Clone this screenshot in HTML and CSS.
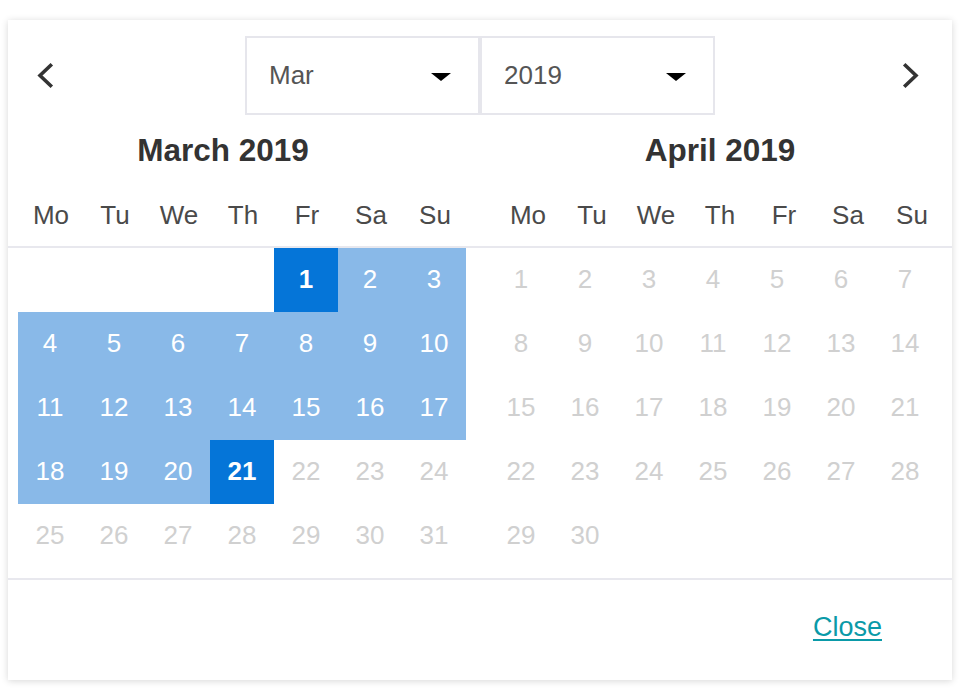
FILE: index.html
```html
<!DOCTYPE html>
<html lang="en">
<head>
<meta charset="utf-8">
<title>Date range picker</title>
<link rel="stylesheet" href="styles.css">
</head>
<body>
<div class="picker">
  <div class="nav">
    <button class="nav-btn nav-prev" aria-label="Previous month">
      <svg width="20" height="30" viewBox="0 0 20 30"><path d="M14.5 4.5 L4 14.5 L14.5 24.5" fill="none" stroke="#333" stroke-width="3.6" stroke-linecap="square" stroke-linejoin="miter"/></svg>
    </button>
    <div class="selects">
      <div class="select"><span>Mar</span><span class="caret"></span></div>
      <div class="select"><span>2019</span><span class="caret"></span></div>
    </div>
    <button class="nav-btn nav-next" aria-label="Next month">
      <svg width="20" height="30" viewBox="0 0 20 30"><path d="M4.5 4.5 L15 14.5 L4.5 24.5" fill="none" stroke="#333" stroke-width="3.6" stroke-linecap="square" stroke-linejoin="miter"/></svg>
    </button>
  </div>

  <div class="months-head">
    <div class="month-head first">
      <div class="month-title title-mar">March 2019</div>
      <div class="weekdays"><span>Mo</span><span>Tu</span><span>We</span><span>Th</span><span>Fr</span><span>Sa</span><span>Su</span></div>
    </div>
    <div class="month-head second">
      <div class="month-title title-apr">April 2019</div>
      <div class="weekdays"><span>Mo</span><span>Tu</span><span>We</span><span>Th</span><span>Fr</span><span>Sa</span><span>Su</span></div>
    </div>
  </div>

  <div class="months-body">
    <div class="days first">
      <span class="day edge start-fri">1</span>
      <span class="day range">2</span>
      <span class="day range">3</span>
      <span class="day range">4</span>
      <span class="day range">5</span>
      <span class="day range">6</span>
      <span class="day range">7</span>
      <span class="day range">8</span>
      <span class="day range">9</span>
      <span class="day range">10</span>
      <span class="day range">11</span>
      <span class="day range">12</span>
      <span class="day range">13</span>
      <span class="day range">14</span>
      <span class="day range">15</span>
      <span class="day range">16</span>
      <span class="day range">17</span>
      <span class="day range">18</span>
      <span class="day range">19</span>
      <span class="day range">20</span>
      <span class="day edge">21</span>
      <span class="day off">22</span>
      <span class="day off">23</span>
      <span class="day off">24</span>
      <span class="day off">25</span>
      <span class="day off">26</span>
      <span class="day off">27</span>
      <span class="day off">28</span>
      <span class="day off">29</span>
      <span class="day off">30</span>
      <span class="day off">31</span>
    </div>
    <div class="days second">
      <span class="day off">1</span>
      <span class="day off">2</span>
      <span class="day off">3</span>
      <span class="day off">4</span>
      <span class="day off">5</span>
      <span class="day off">6</span>
      <span class="day off">7</span>
      <span class="day off">8</span>
      <span class="day off">9</span>
      <span class="day off">10</span>
      <span class="day off">11</span>
      <span class="day off">12</span>
      <span class="day off">13</span>
      <span class="day off">14</span>
      <span class="day off">15</span>
      <span class="day off">16</span>
      <span class="day off">17</span>
      <span class="day off">18</span>
      <span class="day off">19</span>
      <span class="day off">20</span>
      <span class="day off">21</span>
      <span class="day off">22</span>
      <span class="day off">23</span>
      <span class="day off">24</span>
      <span class="day off">25</span>
      <span class="day off">26</span>
      <span class="day off">27</span>
      <span class="day off">28</span>
      <span class="day off">29</span>
      <span class="day off">30</span>
    </div>
  </div>

  <div class="footer">
    <a class="close" href="#">Close</a>
  </div>
</div>
</body>
</html>
```

FILE: styles.css
```css
* { box-sizing: border-box; }

html, body {
  margin: 0;
  background: #ffffff;
}

body {
  padding: 20px 8px 12px 8px;
  font-family: "Liberation Sans", Arial, Helvetica, sans-serif;
  color: #333;
}

.picker {
  width: 944px;
  height: 660px;
  background: #fff;
  box-shadow: 0 1px 7px rgba(0, 0, 0, 0.16);
  padding-top: 16px;
  display: flex;
  flex-direction: column;
}

/* navigation row */
.nav {
  height: 79px;
  display: grid;
  grid-template-columns: 1fr auto 1fr;
  align-items: center;
}

.nav-btn {
  background: none;
  border: 0;
  padding: 0;
  width: 20px;
  height: 30px;
  cursor: pointer;
}

.nav-btn svg { display: block; }

.nav-prev { justify-self: start; margin-left: 28px; margin-top: 1px; }
.nav-next { justify-self: end; margin-right: 31px; margin-top: 1px; }

.selects {
  display: flex;
  height: 79px;
}

.select {
  width: 235px;
  height: 79px;
  border: 2px solid #e6e6ec;
  display: flex;
  align-items: center;
  justify-content: space-between;
  padding: 0 27px 0 22px;
  font-size: 26px;
  color: #555;
}

.select + .select { padding-left: 22px; }

.caret {
  width: 0;
  height: 0;
  border-left: 10px solid transparent;
  border-right: 10px solid transparent;
  border-top: 8px solid #000;
  margin-top: 2px;
}

/* month headers */
.months-head {
  display: flex;
  padding: 0 15px 0 10px;
  gap: 23px;
  border-bottom: 2px solid #e8e8ee;
}

.month-head { width: 448px; }

.month-head.second { margin-left: 7px; }

.month-title {
  margin-top: 15px;
  line-height: 40px;
  height: 40px;
  font-size: 31.5px;
  font-weight: bold;
  color: #333;
  text-align: center;
}

.title-mar { padding-right: 38px; }
.title-apr { padding-left: 0; }

.weekdays {
  margin-top: 14px;
  display: grid;
  grid-template-columns: repeat(7, 64px);
  height: 62px;
  line-height: 62px;
  font-size: 26px;
  color: #4a4a4a;
  text-align: center;
}

.first .weekdays { padding-left: 1px; }

/* day grids */
.months-body {
  display: flex;
  padding: 0 15px 10px 10px;
  gap: 23px;
}

.days {
  width: 448px;
  display: grid;
  grid-template-columns: repeat(7, 64px);
  grid-auto-rows: 64px;
  font-size: 26px;
  text-align: center;
}

.day {
  display: flex;
  align-items: center;
  justify-content: center;
  padding-bottom: 2px;
}

.start-fri { grid-column-start: 5; }

.range {
  background: #89b9e8;
  color: #fff;
}

.edge {
  background: #0575d8;
  color: #fff;
  font-weight: bold;
}

.off { color: #d0d0d0; }

/* footer */
.footer {
  border-top: 2px solid #e8e8ee;
  height: 102px;
  display: flex;
  justify-content: flex-end;
  align-items: flex-start;
  padding: 30px 70px 0 0;
}

.close {
  font-size: 27px;
  line-height: 34px;
  color: #0a9aa8;
  text-decoration: underline;
  text-underline-offset: 3px;
}
```
